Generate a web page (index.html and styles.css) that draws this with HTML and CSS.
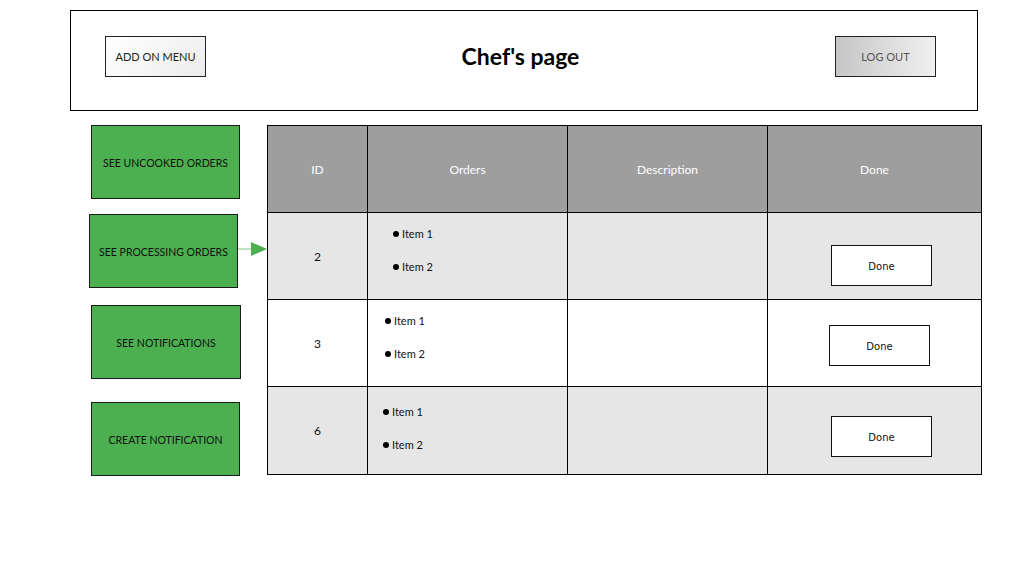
FILE: index.html
```html
<!DOCTYPE html>
<html>
<head>
<meta charset="utf-8">
<link rel="stylesheet" href="styles.css">
</head>
<body>
<header class="topbar">
  <button class="btn btn-light">ADD ON MENU</button>
  <h1 class="title">Chef's page</h1>
  <button class="btn btn-grey">LOG OUT</button>
</header>
<main class="main">
  <nav class="sidebar">
    <button class="side-btn side-1">SEE UNCOOKED ORDERS</button>
    <button class="side-btn side-2">SEE PROCESSING ORDERS</button>
    <button class="side-btn side-3">SEE NOTIFICATIONS</button>
    <button class="side-btn side-4">CREATE NOTIFICATION</button>
  </nav>
  <svg class="arrow" width="30" height="16" viewBox="0 0 30 16">
    <line x1="0" y1="8" x2="14" y2="8" stroke="#7fc681" stroke-width="1"/>
    <polygon points="13,1 29,8 13,15" fill="#4caf50"/>
  </svg>
  <div class="table">
    <div class="cell head">ID</div>
    <div class="cell head">Orders</div>
    <div class="cell head">Description</div>
    <div class="cell head">Done</div>

    <div class="cell shade id">2</div>
    <div class="cell shade orders o1"><ul><li>Item 1</li><li>Item 2</li></ul></div>
    <div class="cell shade"></div>
    <div class="cell shade done d1"><button class="done-btn">Done</button></div>

    <div class="cell id">3</div>
    <div class="cell orders o2"><ul><li>Item 1</li><li>Item 2</li></ul></div>
    <div class="cell"></div>
    <div class="cell done d2"><button class="done-btn">Done</button></div>

    <div class="cell shade id">6</div>
    <div class="cell shade orders o3"><ul><li>Item 1</li><li>Item 2</li></ul></div>
    <div class="cell shade"></div>
    <div class="cell shade done d3"><button class="done-btn">Done</button></div>
  </div>
</main>
</body>
</html>
```

FILE: styles.css
```css
* { box-sizing: border-box; }
body {
  margin: 0;
  background: #fff;
  font-family: "Lato", "Open Sans", sans-serif;
  color: #111;
}
button { font-family: inherit; cursor: pointer; }

.topbar {
  margin: 10px 0 0 70px;
  width: 908px;
  height: 101px;
  border: 1px solid #000;
  display: flex;
  align-items: flex-start;
  justify-content: space-between;
  padding: 25px 41px 0 34px;
}
.btn {
  width: 101px;
  height: 41px;
  border: 1px solid #222;
  font-size: 11px;
  padding: 0;
}
.btn-light {
  background: linear-gradient(135deg, #ffffff, #ececec);
  color: #222;
}
.btn-grey {
  background: linear-gradient(90deg, #c6c6c6, #f0f0f0);
  color: #555;
}
.title {
  margin: 0;
  height: 41px;
  line-height: 41px;
  font-size: 23px;
  font-weight: 700;
  color: #000;
}

.main {
  position: relative;
  display: flex;
  align-items: flex-start;
  margin-top: 14px;
  padding-left: 89px;
}
.sidebar {
  width: 152px;
  display: flex;
  flex-direction: column;
  align-items: flex-start;
}
.side-btn {
  height: 74px;
  width: 149px;
  background: #4caf50;
  border: 1px solid #1b1b1b;
  color: #111;
  font-size: 10.5px;
  padding: 2px 0 0 0;
}
.side-1 { margin-left: 2px; }
.side-2 { margin-left: 0; margin-top: 15px; }
.side-3 { margin-left: 2px; margin-top: 17px; width: 150px; }
.side-4 { margin-left: 2px; margin-top: 23px; }

.arrow {
  position: absolute;
  left: 238px;
  top: 116px;
}

.table {
  margin-left: 26px;
  display: grid;
  grid-template-columns: 100px 200px 200px 214px;
  grid-template-rows: 87px 87px 87px 88px;
  border-left: 1px solid #000;
  border-top: 1px solid #000;
}
.cell {
  border-right: 1px solid #000;
  border-bottom: 1px solid #000;
  background: #fff;
  font-size: 12px;
}
.cell.head {
  background: #9e9e9e;
  color: #fff;
  display: flex;
  align-items: center;
  justify-content: center;
}
.cell.shade { background: #e6e6e6; }
.cell.id {
  display: flex;
  align-items: center;
  justify-content: center;
  color: #111;
}
.orders ul {
  margin: 0;
  padding: 0;
  list-style: none;
  font-size: 11px;
}
.orders li {
  height: 33px;
  line-height: 16px;
  display: flex;
  align-items: flex-start;
}
.orders li::before {
  content: "";
  width: 6px;
  height: 6px;
  border-radius: 50%;
  background: #000;
  margin: 5px 3px 0 0;
}
.o1 { padding: 13px 0 0 25px; }
.o2 { padding: 13px 0 0 17px; }
.o3 { padding: 17px 0 0 15px; }

.done-btn {
  width: 101px;
  height: 41px;
  border: 1px solid #111;
  background: #fff;
  font-family: "DejaVu Sans", sans-serif;
  font-size: 10px;
  color: #111;
  padding: 2px 0 0 0;
}
.d1 { padding: 32px 0 0 63px; }
.d2 { padding: 25px 0 0 61px; }
.d3 { padding: 29px 0 0 63px; }
```
